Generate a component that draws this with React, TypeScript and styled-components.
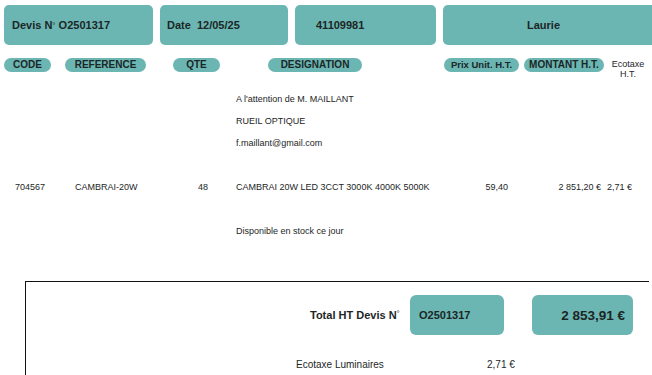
import styled, { createGlobalStyle } from "styled-components";

const TEAL = "#6bb6b3";
const INK = "#1c2626";

const GlobalStyle = createGlobalStyle`
  html, body {
    margin: 0;
    padding: 0;
    background: #ffffff;
    overflow: hidden;
  }
  body {
    font-family: "Liberation Sans", Arial, sans-serif;
    color: ${INK};
  }
`;

const Page = styled.div`
  width: 652px;
  height: 375px;
  overflow: hidden;
`;

const TopBar = styled.div`
  display: flex;
  gap: 7px;
  padding: 5px 0 0 4px;
`;

const InfoBox = styled.div<{ $w: number; $pad: number; $center?: boolean }>`
  flex: none;
  width: ${(p) => p.$w}px;
  height: 40px;
  box-sizing: border-box;
  padding-left: ${(p) => p.$pad}px;
  padding-right: ${(p) => (p.$center ? 14 : 0)}px;
  display: flex;
  align-items: center;
  justify-content: ${(p) => (p.$center ? "center" : "flex-start")};
  background: ${TEAL};
  border-radius: 5px;
  font-size: 11px;
  font-weight: bold;
  white-space: pre;
`;

const Deg = styled.span`
  font-size: 8px;
  vertical-align: 3px;
  font-weight: normal;
`;

const Table = styled.div`
  display: grid;
  grid-template-columns: 60px 100px 72px 208px 80px 83px 45px;
  grid-template-rows: 30px;
  grid-auto-rows: 22px;
  padding-left: 4px;
  margin-top: 13px;
`;

const HeadCell = styled.div<{ $offset?: number }>`
  padding-left: ${(p) => p.$offset ?? 0}px;
`;

const Pill = styled.div<{ $w: number }>`
  width: ${(p) => p.$w}px;
  height: 14px;
  border-radius: 7px;
  background: ${TEAL};
  font-size: 10px;
  font-weight: bold;
  line-height: 14px;
  text-align: center;
  white-space: nowrap;
`;

const SmallPill = styled(Pill)`
  font-size: 9.5px;
`;

const EcoHead = styled.div`
  font-size: 9px;
  line-height: 10px;
  text-align: center;
  width: 36px;
  margin-left: 3px;
  margin-top: 1px;
`;

const Cell = styled.div<{ $offset?: number; $end?: number; $right?: boolean }>`
  font-size: 9px;
  line-height: 22px;
  padding-left: ${(p) => p.$offset ?? 0}px;
  padding-right: ${(p) => p.$end ?? 0}px;
  text-align: ${(p) => (p.$right ? "right" : "left")};
  white-space: nowrap;
`;

const Spacer = styled.div`
  grid-column: 1 / -1;
`;

const TotalsFrame = styled.div`
  margin: 39px 0 0 25px;
  width: 624px;
  height: 120px;
  border-top: 1px solid #111;
  border-left: 1px solid #111;
  box-sizing: border-box;
  padding-top: 13px;
`;

const TotalRow = styled.div`
  display: flex;
  align-items: center;
  padding-left: 284px;
`;

const TotalLabel = styled.div`
  flex: none;
  width: 100px;
  font-size: 11px;
  font-weight: bold;
  white-space: nowrap;
`;

const TotalBox = styled.div<{ $w: number; $big?: boolean }>`
  flex: none;
  width: ${(p) => p.$w}px;
  height: 40px;
  box-sizing: border-box;
  border-radius: 6px;
  background: ${TEAL};
  display: flex;
  align-items: center;
  justify-content: ${(p) => (p.$big ? "flex-end" : "flex-start")};
  padding: ${(p) => (p.$big ? "0 8px 0 0" : "0 0 0 9px")};
  margin-right: 28px;
  font-weight: bold;
  font-size: ${(p) => (p.$big ? "13.5px" : "11px")};
  white-space: nowrap;
`;

const EcoRow = styled.div`
  display: flex;
  margin-top: 19px;
  padding-left: 270px;
  font-size: 10px;
  line-height: 22px;
`;

const EcoLabel = styled.div`
  width: 191px;
`;

export default function App() {
  return (
    <Page>
      <GlobalStyle />
      <TopBar>
        <InfoBox $w={149} $pad={8}>
          Devis N<Deg>°</Deg> O2501317
        </InfoBox>
        <InfoBox $w={128} $pad={7}>
          {"Date  12/05/25"}
        </InfoBox>
        <InfoBox $w={141} $pad={21}>
          41109981
        </InfoBox>
        <InfoBox $w={215} $pad={0} $center>
          Laurie
        </InfoBox>
      </TopBar>

      <Table>
        <HeadCell>
          <Pill $w={47}>CODE</Pill>
        </HeadCell>
        <HeadCell $offset={1}>
          <Pill $w={81}>REFERENCE</Pill>
        </HeadCell>
        <HeadCell $offset={9}>
          <Pill $w={47}>QTE</Pill>
        </HeadCell>
        <HeadCell $offset={32}>
          <Pill $w={94}>DESIGNATION</Pill>
        </HeadCell>
        <HeadCell>
          <SmallPill $w={75}>Prix Unit. H.T.</SmallPill>
        </HeadCell>
        <HeadCell>
          <Pill $w={80}>MONTANT H.T.</Pill>
        </HeadCell>
        <HeadCell>
          <EcoHead>
            Ecotaxe
            <br />
            H.T.
          </EcoHead>
        </HeadCell>

        <Cell />
        <Cell />
        <Cell />
        <Cell>A l'attention de M. MAILLANT</Cell>
        <Cell />
        <Cell />
        <Cell />

        <Cell />
        <Cell />
        <Cell />
        <Cell>RUEIL OPTIQUE</Cell>
        <Cell />
        <Cell />
        <Cell />

        <Cell />
        <Cell />
        <Cell />
        <Cell>f.maillant@gmail.com</Cell>
        <Cell />
        <Cell />
        <Cell />

        <Spacer />

        <Cell $offset={11}>704567</Cell>
        <Cell $offset={11}>CAMBRAI-20W</Cell>
        <Cell $offset={34}>48</Cell>
        <Cell>CAMBRAI 20W LED 3CCT 3000K 4000K 5000K</Cell>
        <Cell $right $end={16}>59,40</Cell>
        <Cell $right $end={6}>2 851,20 €</Cell>
        <Cell>2,71 €</Cell>

        <Spacer />

        <Cell />
        <Cell />
        <Cell />
        <Cell>Disponible en stock ce jour</Cell>
        <Cell />
        <Cell />
        <Cell />
      </Table>

      <TotalsFrame>
        <TotalRow>
          <TotalLabel>
            Total HT Devis N<Deg>°</Deg>
          </TotalLabel>
          <TotalBox $w={94}>O2501317</TotalBox>
          <TotalBox $w={101} $big>
            2 853,91 €
          </TotalBox>
        </TotalRow>
        <EcoRow>
          <EcoLabel>Ecotaxe Luminaires</EcoLabel>
          <div>2,71 €</div>
        </EcoRow>
      </TotalsFrame>
    </Page>
  );
}
